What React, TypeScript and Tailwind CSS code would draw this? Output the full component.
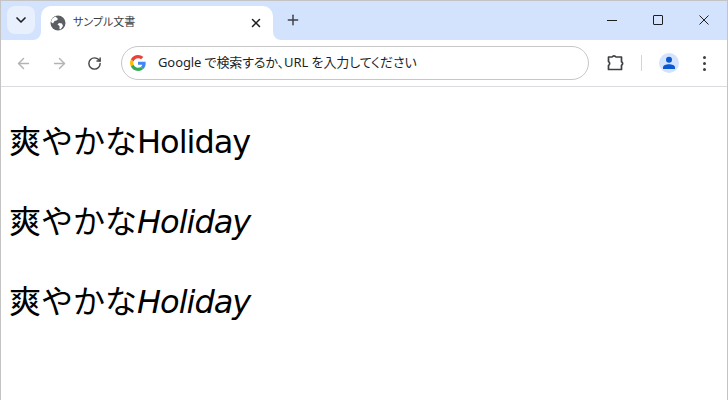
import { ArrowLeft, ArrowRight, ChevronDown, Plus, RotateCw, X } from "lucide-react";

const LINES = [false, true, true];

function TabCurve({ side }: { side: "left" | "right" }) {
  return (
    <svg
      width="8"
      height="8"
      viewBox="0 0 8 8"
      className={side === "left" ? "absolute bottom-0 left-[-8px]" : "absolute bottom-0 right-[-8px]"}
    >
      <path d={side === "left" ? "M8 0V8H0A8 8 0 0 0 8 0Z" : "M0 0V8H8A8 8 0 0 1 0 0Z"} fill="#fff" />
    </svg>
  );
}

function GlobeIcon() {
  return (
    <svg width="16" height="16" viewBox="0 0 16 16">
      <circle cx="8" cy="8" r="7.5" fill="#5b5e63" />
      <path d="M5.500 1.500 8 4 6.500 5.500 4.500 6 3 8.500 1 7A7 7 0 0 1 5.500 1.500ZM9 8l3 .5 1 2.500-2.500 3.500-1-.5V11L7.500 9.500Z" fill="#fff" />
    </svg>
  );
}

function GoogleIcon() {
  return (
    <svg width="16" height="16" viewBox="0 0 48 48">
      <path fill="#EA4335" d="M24 9.500c3.500 0 6.700 1.200 9.200 3.600l6.900-6.900C35.900 2.400 30.500 0 24 0 14.600 0 6.500 5.400 2.600 13.200l8 6.200C12.500 13.700 17.800 9.500 24 9.500z" />
      <path fill="#4285F4" d="M47 24.500c0-1.600-.1-3.100-.4-4.500H24v9h12.900c-.6 3-2.200 5.500-4.700 7.200l7.700 6C44.400 38 47 31.800 47 24.500z" />
      <path fill="#FBBC05" d="M10.600 28.600C10.100 27.100 9.800 25.600 9.800 24s.3-3.100.8-4.600l-8-6.200C.9 16.500 0 20.100 0 24s.9 7.500 2.600 10.800l8-6.200z" />
      <path fill="#34A853" d="M24 48c6.500 0 11.900-2.100 15.900-5.800l-7.700-6c-2.200 1.500-4.900 2.300-8.200 2.300-6.200 0-11.500-4.200-13.400-9.900l-8 6.200C6.500 42.600 14.600 48 24 48z" />
    </svg>
  );
}

function ExtensionIcon() {
  return (
    <svg width="20" height="20" viewBox="0 0 20 20" fill="none" stroke="#3c4043" strokeWidth="1.7" strokeLinejoin="round">
      <path d="M2.500 4H6.200a2 2 0 0 1 3.600 0H15.500V8.700a2 2 0 0 1 0 3.600V16.500H2.500V12.500a2.300 2.300 0 0 0 0-4Z" />
    </svg>
  );
}

function ProfileIcon() {
  return (
    <div className="flex h-5 w-5 items-center justify-center rounded-full bg-[#d3e3fd]">
      <svg width="14" height="14" viewBox="0 0 14 14" fill="#0b57d0">
        <circle cx="7" cy="3.800" r="3" />
        <path d="M1 13v-1.500C1 9.500 4 8.300 7 8.300s6 1.200 6 3.200V13Z" />
      </svg>
    </div>
  );
}

function MenuDots() {
  return (
    <div className="flex flex-col gap-[3px]">
      <div className="h-[3px] w-[3px] rounded-full bg-[#3c4043]" />
      <div className="h-[3px] w-[3px] rounded-full bg-[#3c4043]" />
      <div className="h-[3px] w-[3px] rounded-full bg-[#3c4043]" />
    </div>
  );
}

function WindowIcon({ d }: { d: string }) {
  return (
    <svg width="10" height="10" viewBox="0 0 10 10" fill="none" stroke="#1f1f1f" strokeWidth="1">
      <path d={d} />
    </svg>
  );
}

export default function App() {
  return (
    <div className="h-[400px] w-[728px] overflow-hidden border border-b-0 border-[#c4c4c4] bg-white font-['Noto_Sans_CJK_JP',sans-serif]">
      {/* Tab strip */}
      <div className="flex h-[39px] bg-[#d3e3fd]">
        <div className="ml-[6px] mt-[5px] flex h-[28px] w-[28px] items-center justify-center rounded-lg bg-[#e8f0fe]">
          <ChevronDown className="h-4 w-4 text-[#1f1f1f]" strokeWidth={2.5} />
        </div>
        <div className="relative ml-[6px] mt-[5px] flex h-[34px] w-[232px] items-center rounded-t-[10px] bg-white pl-[9px] pr-[10px]">
          <TabCurve side="left" />
          <GlobeIcon />
          <span className="ml-[7px] mb-[3px] flex-1 text-[11px] text-[#3c4043] [font-feature-settings:'palt']">サンプル文書</span>
          <X className="h-[14px] w-[14px] text-[#1f1f1f]" strokeWidth={2.6} />
          <TabCurve side="right" />
        </div>
        <Plus className="ml-[12px] mt-[11px] h-4 w-4 text-[#3c4043]" strokeWidth={2.2} />
        <div className="ml-auto mr-[18px] flex items-center gap-[36px] pb-[1px]">
          <WindowIcon d="M0 5.500H10" />
          <WindowIcon d="M1 .5H9A.5.5 0 0 1 9.500 1V9A.5.5 0 0 1 9 9.500H1A.5.5 0 0 1 .5 9V1A.5.5 0 0 1 1 .5Z" />
          <WindowIcon d="M.5.5 9.500 9.500M9.500.5 .5 9.500" />
        </div>
      </div>

      {/* Toolbar */}
      <div className="flex h-[47px] items-center rounded-t-[10px] border-b border-[#dadce0] bg-white">
        <ArrowLeft className="ml-[14px] h-[17px] w-[17px] text-[#b1b3b6]" strokeWidth={2} />
        <ArrowRight className="ml-[19px] h-[17px] w-[17px] text-[#b1b3b6]" strokeWidth={2} />
        <RotateCw className="ml-[19px] h-[15px] w-[15px] text-[#444746]" strokeWidth={2.3} />
        <div className="ml-[19px] flex h-[34px] w-[468px] items-center rounded-full border border-[#c7c7c7] pl-[8px]">
          <GoogleIcon />
          <span className="ml-[12px] font-['Noto_Sans','Noto_Sans_CJK_JP',sans-serif] text-[13px] tracking-[-0.1px] text-[#1f1f1f] [font-feature-settings:'palt']">
            Google で検索するか、URL を入力してください
          </span>
        </div>
        <div className="ml-[17px]">
          <ExtensionIcon />
        </div>
        <div className="ml-[15px] h-[16px] w-[1px] bg-[#c2d7f5]" />
        <div className="ml-[17px]">
          <ProfileIcon />
        </div>
        <div className="ml-[24px]">
          <MenuDots />
        </div>
      </div>

      {/* Page content */}
      <div className="flex flex-col gap-[32px] pl-[8px] pt-[28px] font-['DejaVu_Sans','Noto_Sans_CJK_JP',sans-serif] text-[32px] leading-[48px] tracking-[-1px] text-black">
        {LINES.map((italic, i) => (
          <p key={i} className="h-[48px]">
            <span className="font-['Noto_Sans_CJK_JP',sans-serif] tracking-normal">爽やかな</span>
            {italic ? <i>Holiday</i> : "Holiday"}
          </p>
        ))}
      </div>
    </div>
  );
}
